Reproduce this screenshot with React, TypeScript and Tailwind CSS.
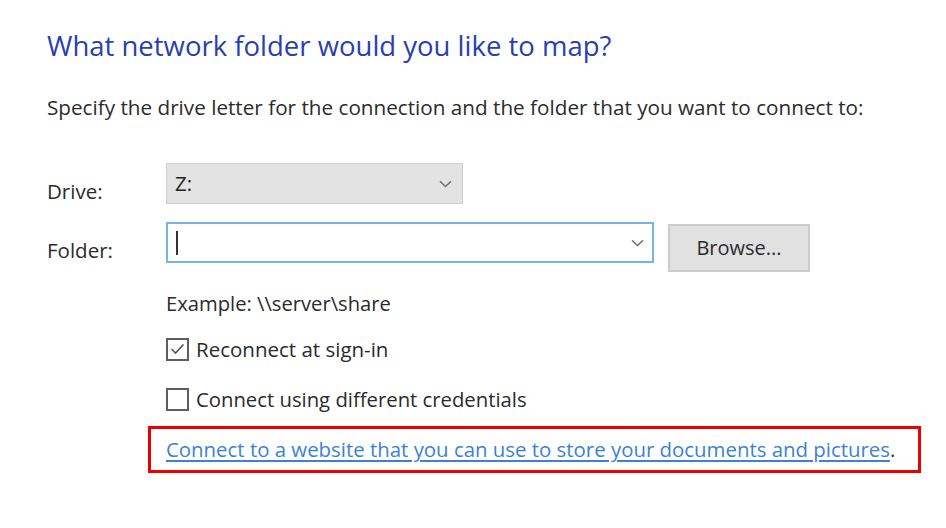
import React from "react";

function Chevron() {
  return (
    <svg width="13" height="8" viewBox="0 0 13 8" fill="none">
      <path d="M1 1.2 L6.5 6.5 L12 1.2" stroke="#6b6b6b" strokeWidth="1.4" />
    </svg>
  );
}

export default function App() {
  return (
    <div
      className="w-[946px] h-[528px] bg-white relative overflow-hidden text-[#2b2b2b]"
      style={{ fontFamily: '"Open Sans", "Noto Sans", Arial, sans-serif' }}
    >
      <div className="pl-[47px] pt-[29px]">
        <h1 className="text-[27.5px] leading-[34px] text-[#2a3fb0]">
          What network folder would you like to map?
        </h1>
        <p className="mt-[30px] text-[20.7px] leading-[28px]">
          Specify the drive letter for the connection and the folder that you want to connect to:
        </p>

        <div className="mt-[42px] grid grid-cols-[119px_1fr] items-start gap-y-[17px]">
          <div className="text-[20.5px] leading-[28px] pt-[14px]">Drive:</div>
          <div className="w-[297px] h-[41px] bg-[#e3e3e3] border border-[#cfcfcf] flex items-center justify-between pl-[8px] pr-[10px]">
            <span className="text-[20.5px] text-[#222]">Z:</span>
            <Chevron />
          </div>

          <div className="text-[20.5px] leading-[28px] pt-[14px]">Folder:</div>
          <div className="flex items-start gap-[14px]">
            <div className="w-[488px] h-[41px] bg-white border-2 border-[#78b2ea] flex items-center justify-between pl-[8px] pr-[8px]">
              <span className="w-[2px] h-[24px] bg-[#333]" />
              <Chevron />
            </div>
            <div className="mt-[2px] w-[142px] h-[48px] bg-[#e1e1e1] border-2 border-[#cdcdcd] flex items-center justify-center text-[20px]">
              Browse...
            </div>
          </div>
        </div>

        <div className="ml-[119px]">
          <div className="mt-[18px] text-[20.2px] leading-[26px]">
            Example: \\server\share
          </div>
          <div className="mt-[20px] flex items-center gap-[7px]">
            <span className="w-[23px] h-[23px] border-2 border-[#5e5e5e] flex items-center justify-center">
              <svg width="15" height="12" viewBox="0 0 15 12" fill="none">
                <path d="M1.5 6 L5.5 10 L13.5 1.5" stroke="#555" strokeWidth="1.6" />
              </svg>
            </span>
            <span className="text-[20.5px] leading-[26px]">Reconnect at sign-in</span>
          </div>
          <div className="mt-[24px] flex items-center gap-[7px]">
            <span className="w-[23px] h-[23px] border-2 border-[#5e5e5e]" />
            <span className="text-[20.3px] leading-[26px]">
              Connect using different credentials
            </span>
          </div>
        </div>

        <div className="mt-[14px] ml-[101px] w-[773px] h-[47px] border-[3px] border-[#ee0000] flex items-center pl-[15px]">
          <span className="text-[20.4px] text-[#3b82d6] underline underline-offset-[3px]">
            Connect to a website that you can use to store your documents and pictures
          </span>
          <span className="text-[20.4px] text-[#2b2b2b]">.</span>
        </div>
      </div>
    </div>
  );
}
